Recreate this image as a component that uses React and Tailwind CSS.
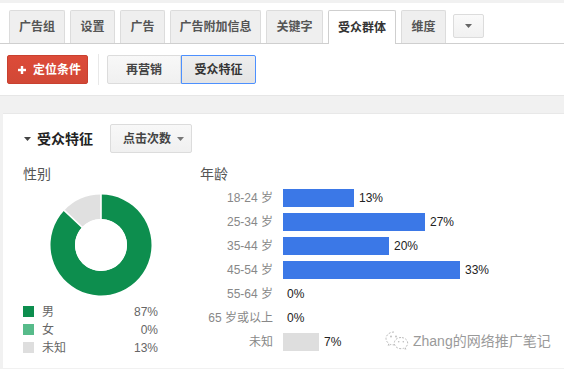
import React from "react";

const tabs = [
  { label: "广告组", w: "w-[56px]" },
  { label: "设置", w: "w-[45px]" },
  { label: "广告", w: "w-[45px]" },
  { label: "广告附加信息", w: "w-[91px]" },
  { label: "关键字", w: "w-[57px]" },
  { label: "受众群体", w: "w-[68px]", active: true },
  { label: "维度", w: "w-[45px]" },
];

const ages = [
  { label: "18-24 岁", pct: 13, w: 71 },
  { label: "25-34 岁", pct: 27, w: 142 },
  { label: "35-44 岁", pct: 20, w: 106 },
  { label: "45-54 岁", pct: 33, w: 177 },
  { label: "55-64 岁", pct: 0, w: 0 },
  { label: "65 岁或以上", pct: 0, w: 0 },
  { label: "未知", pct: 7, w: 36, gray: true },
];

function arc(cx, cy, R, r, a0, a1) {
  const p = (rad, a) => [
    cx + rad * Math.sin((a * Math.PI) / 180),
    cy - rad * Math.cos((a * Math.PI) / 180),
  ];
  const large = a1 - a0 > 180 ? 1 : 0;
  const [x1, y1] = p(R, a0);
  const [x2, y2] = p(R, a1);
  const [x3, y3] = p(r, a1);
  const [x4, y4] = p(r, a0);
  return `M${x1} ${y1} A${R} ${R} 0 ${large} 1 ${x2} ${y2} L${x3} ${y3} A${r} ${r} 0 ${large} 0 ${x4} ${y4} Z`;
}

function Donut() {
  const cx = 51,
    cy = 51,
    R = 50.5,
    r = 26;
  const split = 313.2;
  const edge = (a) => [
    cx + R * Math.sin((a * Math.PI) / 180),
    cy - R * Math.cos((a * Math.PI) / 180),
  ];
  const [ex, ey] = edge(split);
  return (
    <svg width="102" height="102" viewBox="0 0 102 102">
      <path d={arc(cx, cy, R, r, 0, split)} fill="#0d8e4e" />
      <path d={arc(cx, cy, R, r, split, 360)} fill="#e0e0e0" />
      <line x1={cx} y1={cy} x2={cx} y2={0} stroke="#fff" strokeWidth="1.6" />
      <line x1={cx} y1={cy} x2={ex} y2={ey} stroke="#fff" strokeWidth="1.6" />
      <circle cx={cx} cy={cy} r={r} fill="#fff" />
    </svg>
  );
}

function Caret({ color = "#666" }) {
  return (
    <svg width="7" height="4" viewBox="0 0 7 4">
      <path d="M0 0 L7 0 L3.5 4 Z" fill={color} />
    </svg>
  );
}

function WeChat() {
  return (
    <svg width="24" height="22" viewBox="0 0 24 22" fill="none">
      <path
        d="M9 2 C4.5 2 1 5 1 8.6 C1 10.6 2.1 12.3 3.8 13.5 L3.2 15.8 L5.9 14.4 C6.9 14.7 7.9 14.9 9 14.9"
        stroke="#bbb"
        strokeWidth="1"
        strokeDasharray="2 1.5"
      />
      <path
        d="M16 7.5 C12.2 7.5 9.3 10 9.3 13.1 C9.3 16.2 12.2 18.7 16 18.7 C16.9 18.7 17.7 18.6 18.5 18.3 L20.8 19.6 L20.3 17.5 C21.8 16.4 22.7 14.9 22.7 13.1 C22.7 10 19.8 7.5 16 7.5 Z"
        stroke="#bbb"
        strokeWidth="1"
        strokeDasharray="2 1.5"
      />
      <circle cx="6" cy="6.5" r="0.9" fill="#bbb" />
      <circle cx="11" cy="6.5" r="0.9" fill="#bbb" />
      <circle cx="13.7" cy="11.8" r="0.8" fill="#bbb" />
      <circle cx="18.3" cy="11.8" r="0.8" fill="#bbb" />
    </svg>
  );
}

export default function App() {
  return (
    <div className="w-[564px] h-[369px] overflow-hidden bg-[#f1f1f1] font-['Liberation_Sans','Noto_Sans_CJK_SC',sans-serif] relative">
      {/* top panel */}
      <div className="mt-[3px] bg-white border-b border-[#e6e6e6]">
        <div className="h-[41px] flex items-end pl-[9px] border-b border-[#cfcfcf]">
          <div className="flex items-end gap-[5px]">
            {tabs.map((t) =>
              t.active ? (
                <div
                  key={t.label}
                  className={`${t.w} h-[34px] -mb-px bg-white border border-b-0 border-[#cfcfcf] rounded-t-[2px] flex items-center justify-center text-[12px] font-bold text-[#333]`}
                >
                  {t.label}
                </div>
              ) : (
                <div
                  key={t.label}
                  className={`${t.w} h-[33px] bg-[#efefef] border border-b-0 border-[#dcdcdc] rounded-t-[2px] flex items-center justify-center text-[12px] font-bold text-[#555]`}
                >
                  {t.label}
                </div>
              )
            )}
          </div>
          <div className="ml-[7px] mb-[5px] w-[31px] h-[24px] border border-[#dcdcdc] bg-gradient-to-b from-[#fafafa] to-[#f1f1f1] flex items-center justify-center rounded-[2px]">
            <Caret color="#666" />
          </div>
        </div>
        <div className="flex items-center py-[10px] pl-[7px]">
          <div className="w-[81px] h-[29px] rounded-[2px] border border-[#c9402f] bg-gradient-to-b from-[#dd4b39] to-[#d14836] flex items-center text-white text-[12px] font-bold">
            <svg width="8" height="8" viewBox="0 0 8 8" className="ml-[10px] mr-[7px]">
              <rect x="2.8" y="0" width="2.4" height="8" fill="#fff" />
              <rect x="0" y="2.8" width="8" height="2.4" fill="#fff" />
            </svg>
            定位条件
          </div>
          <div className="ml-[10px] w-px h-[31px] bg-[#e8e8e8]" />
          <div className="ml-[8px] flex">
            <div className="w-[74px] h-[29px] border border-[#dcdcdc] bg-gradient-to-b from-[#f8f8f8] to-[#f0f0f0] rounded-l-[2px] flex items-center justify-center text-[12px] font-bold text-[#444]">
              再营销
            </div>
            <div className="w-[75px] h-[29px] border border-[#4d90fe] bg-gradient-to-b from-[#eeeeee] to-[#e4e4e4] rounded-r-[2px] flex items-center justify-center text-[12px] font-bold text-[#333]">
              受众特征
            </div>
          </div>
        </div>
      </div>

      {/* main panel */}
      <div className="mt-[17px] ml-[3px] h-[255px] bg-white border-t border-[#e8e8e8]">
        <div className="flex items-center pt-[10px] pl-[21px]">
          <Caret color="#444" />
          <div className="ml-[6px] text-[14px] font-bold text-[#222] leading-none">受众特征</div>
          <div className="ml-[17px] w-[82px] h-[29px] border border-[#dcdcdc] bg-gradient-to-b from-[#f8f8f8] to-[#f0f0f0] rounded-[2px] flex items-center pl-[12px] text-[12px] font-bold text-[#444]">
            点击次数
            <span className="ml-[6px] flex">
              <Caret color="#777" />
            </span>
          </div>
        </div>

        <div className="flex mt-[13px] pl-[20px]">
          {/* gender */}
          <div className="w-[177px]">
            <div className="text-[14px] leading-[16px] text-[#555]">性别</div>
            <div className="mt-[12px] ml-[27px]">
              <Donut />
            </div>
            <div className="mt-[10px] w-[135px] flex flex-col gap-[7px]">
              {[
                { c: "bg-[#0d8e4e]", l: "男", p: "87%" },
                { c: "bg-[#57bb8a]", l: "女", p: "0%" },
                { c: "bg-[#dedede]", l: "未知", p: "13%" },
              ].map((g) => (
                <div key={g.l} className="flex items-center h-[11px]">
                  <div className={`w-[11px] h-[11px] ${g.c}`} />
                  <div className="ml-[8px] text-[12px] text-[#666]">{g.l}</div>
                  <div className="ml-auto text-[12px] text-[#666]">{g.p}</div>
                </div>
              ))}
            </div>
          </div>

          {/* age */}
          <div>
            <div className="text-[14px] leading-[16px] text-[#555]">年龄</div>
            <div className="mt-[7px] flex flex-col gap-[6px]">
              {ages.map((a) => (
                <div key={a.label} className="flex items-center h-[18px]">
                  <div className="w-[73px] text-right text-[12px] text-[#888] whitespace-nowrap">
                    {a.label}
                  </div>
                  <div className="ml-[10px] flex items-center">
                    {a.w > 0 && (
                      <div
                        className={`h-[18px] ${a.gray ? "bg-[#dedede]" : "bg-[#3b78e7]"}`}
                        style={{ width: a.w }}
                      />
                    )}
                    <div className={`${a.w > 0 ? "ml-[5px]" : "ml-[4px]"} text-[12px] text-[#222]`}>
                      {a.pct}%
                    </div>
                  </div>
                </div>
              ))}
            </div>
          </div>
        </div>
      </div>

      {/* watermark */}
      <div className="absolute left-[385px] top-[330px] flex items-center gap-[4px]">
        <WeChat />
        <div className="text-[14px] text-[#9a9a9a] whitespace-nowrap">Zhang的网络推广笔记</div>
      </div>
    </div>
  );
}
